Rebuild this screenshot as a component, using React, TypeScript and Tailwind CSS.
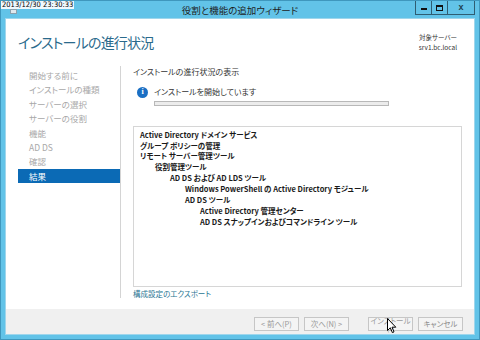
import React from "react";

const FONT = "[font-family:'Noto_Sans_CJK_JP',sans-serif] [font-feature-settings:'palt']";

export default function App() {
  const navItems = ["開始する前に", "インストールの種類", "サーバーの選択", "サーバーの役割", "機能", "AD DS", "確認"];
  const tree: { t: string; c: string }[] = [
    { t: "Active Directory ドメイン サービス", c: "pl-0" },
    { t: "グループ ポリシーの管理", c: "pl-0" },
    { t: "リモート サーバー管理ツール", c: "pl-0" },
    { t: "役割管理ツール", c: "pl-[15px]" },
    { t: "AD DS および AD LDS ツール", c: "pl-[30px]" },
    { t: "Windows PowerShell の Active Directory モジュール", c: "pl-[45px]" },
    { t: "AD DS ツール", c: "pl-[45px]" },
    { t: "Active Directory 管理センター", c: "pl-[60px]" },
    { t: "AD DS スナップインおよびコマンドライン ツール", c: "pl-[60px]" },
  ];
  return (
    <div className={`relative w-[480px] h-[340px] overflow-hidden bg-[#62c3e8] flex flex-col border border-[#3f97bd] ${FONT}`}>
      {/* title bar */}
      <div className="relative h-[17px] flex items-center justify-center shrink-0">
        <span className="text-[9.5px] text-[#1d1d1d] leading-none mt-[2px]">役割と機能の追加ウィザード</span>
        <div className="absolute left-[9px] top-[8px] w-[7px] h-[5px] bg-[#dfe8ee] border border-[#8aa0ad]" />
        <div className="absolute right-[4px] top-[-1px] flex h-[15px] border border-[#2f5d72] bg-[#62c3e8]">
          <div className="w-[16px] flex items-center justify-center border-r border-[#2f5d72]">
            <div className="w-[6px] h-[2px] bg-[#111] mt-[3px]" />
          </div>
          <div className="w-[16px] flex items-center justify-center border-r border-[#2f5d72]">
            <div className="w-[7px] h-[6px] border border-[#111] border-t-2" />
          </div>
          <div className="w-[26px] flex items-center justify-center text-[9px] font-bold text-[#1f3f50] leading-none [font-family:'Liberation_Sans',sans-serif]">x</div>
        </div>
      </div>

      {/* client */}
      <div className="mx-[4px] flex-1 bg-white flex flex-col border border-[#9fd6ec]">
        {/* header */}
        <div className="h-[47px] flex items-start justify-between pl-[12px] pr-[17px] shrink-0">
          <div className="text-[14px] tracking-[-0.8px] leading-none text-[#2a6a8c] mt-[16px]">インストールの進行状況</div>
          <div className="mt-[14px] flex flex-col items-end text-[6.5px] leading-[9.5px] text-[#333]">
            <div>対象サーバー</div>
            <div>srv1.bc.local</div>
          </div>
        </div>

        {/* body */}
        <div className="flex h-[243px] shrink-0">
          <div className="w-[115px] h-[232px] border-r border-[#d4d4d4] pl-[12px] pt-[2px] shrink-0">
            {navItems.map((n) => (
              <div key={n} className="h-[14.4px] flex items-center pl-[11px] text-[8.5px] text-[#a8a8a8] leading-none">{n}</div>
            ))}
            <div className="h-[14.4px] flex items-center pl-[11px] text-[8.5px] text-white bg-[#0b6ab5] leading-none">結果</div>
          </div>
          <div className="flex-1 flex flex-col pl-[12px] pr-[12px]">
            <div className="h-[11px] flex items-center text-[8px] text-[#333] leading-none">インストールの進行状況の表示</div>
            <div className="flex items-center mt-[10px] pl-[4px] h-[10px]">
              <div className="w-[11px] h-[11px] rounded-full bg-[#1a6fc4] flex items-center justify-center text-white text-[8px] font-bold leading-none [font-family:'Liberation_Serif',serif]">i</div>
              <span className="ml-[6px] text-[8px] text-[#333] leading-none">インストールを開始しています</span>
            </div>
            <div className="ml-[21px] mt-[4px] w-[235px] h-[5px] border border-[#b8b8b8] bg-[#ececec]" />
            <div className="mt-[20px] h-[161px] border border-[#d6d6d6] pl-[6px] pt-[2px]">
              {tree.map((r) => (
                <div key={r.t} className={`h-[10.9px] flex items-center text-[7.5px] font-bold text-[#1a1a1a] leading-none whitespace-nowrap ${r.c}`}>{r.t}</div>
              ))}
            </div>
            <div className="mt-[2px] h-[10px] flex items-center text-[7.5px] text-[#2a7694] leading-none">構成設定のエクスポート</div>
          </div>
        </div>

        {/* footer */}
        <div className="flex-1 bg-[#f0f0f0] flex items-start justify-end pr-[11px] pt-[8px]">
          <div className="flex">
            <button className="w-[45px] h-[14px] border border-[#c6c6c6] bg-[#f4f4f4] text-[7.5px] text-[#9a9a9a] leading-none flex items-center justify-center">&lt; 前へ(P)</button>
            <button className="ml-[5px] w-[45px] h-[14px] border border-[#c6c6c6] bg-[#f4f4f4] text-[7.5px] text-[#9a9a9a] leading-none flex items-center justify-center">次へ(N) &gt;</button>
            <button className="ml-[19px] w-[45px] h-[14px] border border-[#c6c6c6] bg-[#f4f4f4] text-[7.5px] text-[#9a9a9a] leading-none flex items-center justify-center">インストール(I)</button>
            <button className="ml-[5px] w-[45px] h-[14px] border border-[#c6c6c6] bg-[#f4f4f4] text-[7.5px] text-[#8a8a8a] leading-none flex items-center justify-center">キャンセル</button>
          </div>
        </div>
      </div>
      <div className="h-[4px] shrink-0" />

      {/* timestamp */}
      <div className="absolute left-0 top-0 h-[8px] px-[1px] bg-white/90 text-[7.5px] leading-[8px] text-black [font-family:'DejaVu_Sans_Condensed','Liberation_Sans',sans-serif] [font-feature-settings:normal]">2013/12/30 23:30:33</div>

      {/* cursor */}
      <svg className="absolute left-[386px] top-[317px]" width="10" height="16" viewBox="0 0 10 16">
        <path d="M0.5 0.5 L0.5 12.5 L3.3 9.8 L5.4 14.6 L7 13.9 L5 9.2 L8.8 9.2 Z" fill="white" stroke="black" strokeWidth="1" strokeLinejoin="round" />
      </svg>
    </div>
  );
}
